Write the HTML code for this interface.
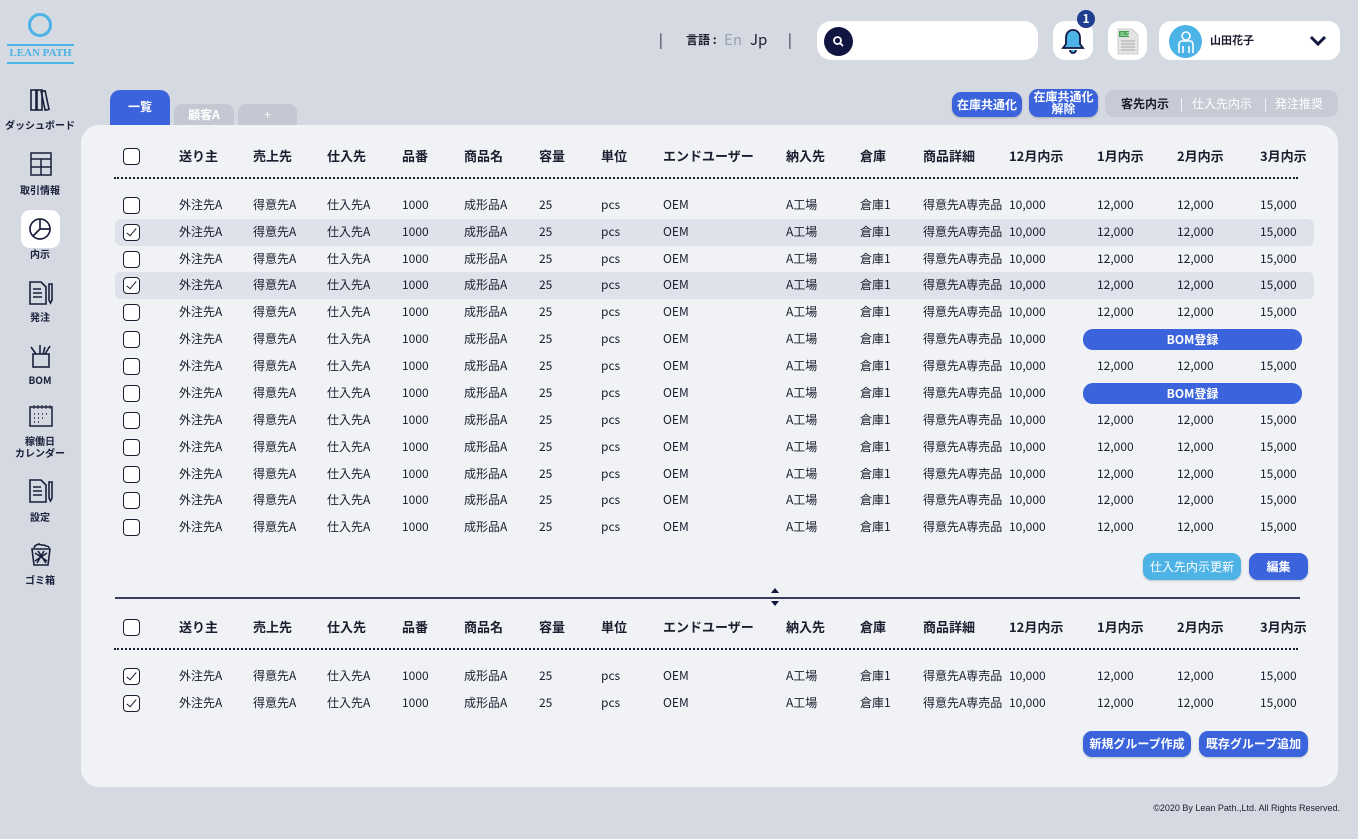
<!DOCTYPE html>
<html><head><meta charset="utf-8"><style>
*{margin:0;padding:0;box-sizing:border-box}
body{width:1358px;height:839px;background:#d5d9e1;font-family:"Noto Sans CJK JP","Liberation Sans",sans-serif;color:#1a1d2e;position:relative;overflow:hidden}
.a{position:absolute}
.side{position:absolute;width:80px;text-align:center;font-size:10px;font-weight:bold;color:#1b1f3b;left:0;line-height:12px}
.panel{position:absolute;left:81px;top:125px;width:1257px;height:662px;background:#f0f2f5;border-radius:18px}
.r{position:absolute;left:0;width:1358px;height:27px;font-size:12px}
.r span{position:absolute;top:5px;line-height:16px;white-space:nowrap}
.h{font-size:13px;font-weight:bold}
.cb{position:absolute;left:123px;top:5px;width:17px;height:17px;border:1.5px solid #1a1d2e;border-radius:4px;background:#fff}
.cb.k::after{content:"";position:absolute;left:5px;top:1px;width:4px;height:9px;border:solid #1a1d2e;border-width:0 1.3px 1.3px 0;transform:rotate(40deg)}
.hl{position:absolute;left:115px;width:1199px;height:27px;background:#dfe2ea;border-radius:6px}
.c1{left:179px}.c2{left:253px}.c3{left:327px}.c4{left:402px}.c5{left:464px}.c6{left:539px}.c7{left:601px}.c8{left:663px}.c9{left:786px}.c10{left:860px}.c11{left:923px}.c12{left:1009px}.c13{left:1097px}.c14{left:1177px}.c15{left:1260px}
.dot{position:absolute;left:114px;width:1184px;border-top:2px dotted #1a1d2e}
.btn{position:absolute;color:#fff;font-size:12px;font-weight:bold;text-align:center;border-radius:9px;background:#3a63dc;box-shadow:0 1px 2px rgba(0,0,0,.2)}
.bom{position:absolute;left:1083px;width:219px;height:21px;top:3px;background:#3a63dc;border-radius:10px;color:#fff;font-size:12px;font-weight:bold;text-align:center;line-height:21px}
.wb{position:absolute;background:#fff;border-radius:12px}
</style></head><body>
<div class="a" style="left:28px;top:13px;width:24px;height:24px;border:3px solid #4bb3e6;border-radius:50%"></div>
<div class="a" style="left:7px;top:44px;width:67px;border-top:2px solid #4bb3e6"></div>
<div class="a" style="left:2px;top:47px;width:77px;font-family:'Liberation Serif',serif;font-size:11px;font-weight:bold;color:#4bb3e6;text-align:center;line-height:13px;white-space:nowrap">LEAN PATH</div>
<div class="a" style="left:7px;top:62px;width:67px;border-top:2px solid #4bb3e6"></div>
<svg class="a" style="left:29px;top:88px" width="24" height="24" viewBox="0 0 24 24" fill="none" stroke="#1b1f3b" stroke-width="1.6"><rect x="2" y="2" width="5" height="20"/><rect x="8" y="2" width="5" height="20"/><rect x="14" y="3" width="4" height="19" transform="rotate(-12 16 12)"/></svg>
<div class="side" style="top:119px">ダッシュボード</div>
<svg class="a" style="left:30px;top:152px" width="22" height="24" viewBox="0 0 22 24" fill="none" stroke="#1b1f3b" stroke-width="1.5"><rect x="1" y="1" width="20" height="22"/><line x1="1" y1="7" x2="21" y2="7"/><line x1="11" y1="7" x2="11" y2="23"/><line x1="1" y1="15" x2="21" y2="15"/></svg>
<div class="side" style="top:184px">取引情報</div>
<div class="a" style="left:21px;top:210px;width:39px;height:38px;background:#fff;border-radius:9px"></div>
<svg class="a" style="left:28px;top:216px" width="26" height="26" viewBox="0 0 26 26" fill="none" stroke="#1b1f3b" stroke-width="1.7"><circle cx="12" cy="13" r="10"/><path d="M12 3v10h10M12 13l-7 7"/></svg>
<div class="side" style="top:248px">内示</div>
<svg class="a" style="left:28px;top:280px" width="26" height="26" viewBox="0 0 26 26" fill="none" stroke="#1b1f3b" stroke-width="1.6"><path d="M2 2h11l5 5v17H2z"/><path d="M5 9h8M5 13h9M5 17h9"/><path d="M21 4v16l1.5 3 1.5-3V4z"/></svg>
<div class="side" style="top:311px">発注</div>
<svg class="a" style="left:28px;top:343px" width="26" height="26" viewBox="0 0 26 26" fill="none" stroke="#1b1f3b" stroke-width="1.6"><rect x="5" y="11" width="16" height="13"/><path d="M3 4l5 7M12 2v9M22 3l-5 8M17 4l-2 7"/></svg>
<div class="side" style="top:374px">BOM</div>
<svg class="a" style="left:28px;top:404px" width="26" height="24" viewBox="0 0 26 24" fill="none" stroke="#1b1f3b" stroke-width="1.5"><rect x="2" y="3" width="22" height="19"/><path d="M6 1v4M10 1v4M14 1v4M18 1v4M22 1v4" stroke-width="1"/><path d="M6 10h1M10 10h1M14 10h1M18 10h1M6 14h1M10 14h1M14 14h1M6 18h1M10 18h1" stroke-width="1.5"/></svg>
<div class="side" style="top:435px">稼働日<br>カレンダー</div>
<svg class="a" style="left:28px;top:478px" width="26" height="26" viewBox="0 0 26 26" fill="none" stroke="#1b1f3b" stroke-width="1.6"><path d="M2 2h11l5 5v17H2z"/><path d="M5 9h8M5 13h9M5 17h9"/><path d="M21 4v16l1.5 3 1.5-3V4z"/></svg>
<div class="side" style="top:511px">設定</div>
<svg class="a" style="left:30px;top:542px" width="22" height="24" viewBox="0 0 22 24" fill="none" stroke="#1b1f3b" stroke-width="1.6"><path d="M2 7h18l-2 16H4z"/><path d="M4 6c1-4 4-3 5-4 2 2 5 0 7 2 2 0 3 1 3 2"/><path d="M5 11l12 8M17 11L5 19M8 9l8 12M14 9L7 21"/></svg>
<div class="side" style="top:574px">ゴミ箱</div>
<div class="a" style="left:659px;top:31px;font-size:14px;line-height:18px">|</div>
<div class="a" style="left:686px;top:32px;font-size:12px;font-weight:bold;line-height:16px">言語 :</div>
<div class="a" style="left:724px;top:31px;font-size:15px;color:#9aa1ae;line-height:18px">En</div>
<div class="a" style="left:750px;top:31px;font-size:15px;line-height:18px">Jp</div>
<div class="a" style="left:788px;top:31px;font-size:14px;line-height:18px">|</div>
<div class="wb" style="left:817px;top:21px;width:221px;height:39px;border-radius:14px"></div>
<div class="a" style="left:824px;top:27px;width:29px;height:29px;border-radius:50%;background:#101640"></div>
<svg class="a" style="left:832px;top:35px" width="13" height="13" viewBox="0 0 13 13" fill="none" stroke="#fff" stroke-width="1.8"><circle cx="5.5" cy="5.5" r="3.5"/><path d="M8 8l3 3"/></svg>
<div class="wb" style="left:1053px;top:21px;width:40px;height:39px"></div>
<svg class="a" style="left:1061px;top:27px" width="24" height="28" viewBox="0 0 24 28"><path d="M12 3c-5 0-7 4-7 8v6l-3 4h20l-3-4v-6c0-4-2-8-7-8z" fill="#4bb3e6" stroke="#101640" stroke-width="1.8"/><path d="M9 23a3 3 0 0 0 6 0" fill="#4bb3e6" stroke="#101640" stroke-width="1.8"/></svg>
<div class="a" style="left:1077px;top:10px;width:18px;height:18px;border-radius:50%;background:#1e3d8f;color:#fff;font-size:12px;font-weight:bold;text-align:center;line-height:18px">1</div>
<div class="wb" style="left:1108px;top:21px;width:39px;height:39px"></div>
<svg class="a" style="left:1117px;top:28px" width="22" height="27" viewBox="0 0 22 27"><path d="M1 1h14l6 6v19H1z" fill="#e3e3e3" stroke="#ccc"/><rect x="2" y="3" width="10" height="6" fill="#3aa34a"/><text x="3" y="8" font-size="5" fill="#fff" font-family="Liberation Sans">XLS</text><path d="M4 13h14M4 16h14M4 19h14M4 22h14" stroke="#aaa"/></svg>
<div class="wb" style="left:1159px;top:21px;width:181px;height:39px"></div>
<div class="a" style="left:1169px;top:25px;width:33px;height:33px;border-radius:50%;background:#4bb3e6"></div>
<svg class="a" style="left:1175px;top:29px" width="22" height="26" viewBox="0 0 22 26" fill="none" stroke="#fff" stroke-width="1.6"><circle cx="11" cy="7" r="4"/><path d="M4 24v-9a3 3 0 0 1 3-3h8a3 3 0 0 1 3 3v9M8 24v-7M14 24v-7"/></svg>
<div class="a" style="left:1210px;top:33px;font-size:11px;font-weight:bold;line-height:15px">山田花子</div>
<svg class="a" style="left:1309px;top:35px" width="18" height="12" viewBox="0 0 18 12" fill="none" stroke="#101640" stroke-width="3"><path d="M2 2l7 7 7-7"/></svg>
<div class="a" style="left:110px;top:90px;width:60px;height:36px;background:#3a63dc;border-radius:10px 10px 0 0;color:#fff;font-size:12px;font-weight:bold;text-align:center;line-height:34px">一覧</div>
<div class="a" style="left:174px;top:104px;width:60px;height:22px;background:#c3c8d3;border-radius:8px 8px 0 0;color:#fff;font-size:12px;font-weight:bold;text-align:center;line-height:22px">顧客A</div>
<div class="a" style="left:238px;top:104px;width:59px;height:22px;background:#c3c8d3;border-radius:8px 8px 0 0;color:#fff;font-size:12px;text-align:center;line-height:22px">+</div>
<div class="btn" style="left:952px;top:92px;width:70px;height:25px;line-height:25px">在庫共通化</div>
<div class="btn" style="left:1029px;top:89px;width:69px;height:28px;line-height:12px;padding-top:2px">在庫共通化<br>解除</div>
<div class="a" style="left:1105px;top:90px;width:233px;height:27px;background:#c6cbd6;border-radius:9px;font-size:12px;line-height:27px;color:#fff"><span style="position:absolute;left:16px;color:#1a1d2e;font-weight:bold">客先内示</span><span style="position:absolute;left:75px">|</span><span style="position:absolute;left:87px">仕入先内示</span><span style="position:absolute;left:159px">|</span><span style="position:absolute;left:170px">発注推奨</span></div>
<div class="panel"></div>
<div class="r h" style="top:143px"><div class="cb"></div><span class="c1">送り主</span><span class="c2">売上先</span><span class="c3">仕入先</span><span class="c4">品番</span><span class="c5">商品名</span><span class="c6">容量</span><span class="c7">単位</span><span class="c8">エンドユーザー</span><span class="c9">納入先</span><span class="c10">倉庫</span><span class="c11">商品詳細</span><span class="c12">12月内示</span><span class="c13">1月内示</span><span class="c14">2月内示</span><span class="c15">3月内示</span></div>
<div class="dot" style="top:177px"></div>
<div class="hl" style="top:219px"></div><div class="hl" style="top:272px"></div>
<div class="r" style="top:192px"><div class="cb"></div><span class="c1">外注先A</span><span class="c2">得意先A</span><span class="c3">仕入先A</span><span class="c4">1000</span><span class="c5">成形品A</span><span class="c6">25</span><span class="c7">pcs</span><span class="c8">OEM</span><span class="c9">A工場</span><span class="c10">倉庫1</span><span class="c11">得意先A専売品</span><span class="c12">10,000</span><span class="c13">12,000</span><span class="c14">12,000</span><span class="c15">15,000</span></div>
<div class="r" style="top:219px"><div class="cb k"></div><span class="c1">外注先A</span><span class="c2">得意先A</span><span class="c3">仕入先A</span><span class="c4">1000</span><span class="c5">成形品A</span><span class="c6">25</span><span class="c7">pcs</span><span class="c8">OEM</span><span class="c9">A工場</span><span class="c10">倉庫1</span><span class="c11">得意先A専売品</span><span class="c12">10,000</span><span class="c13">12,000</span><span class="c14">12,000</span><span class="c15">15,000</span></div>
<div class="r" style="top:246px"><div class="cb"></div><span class="c1">外注先A</span><span class="c2">得意先A</span><span class="c3">仕入先A</span><span class="c4">1000</span><span class="c5">成形品A</span><span class="c6">25</span><span class="c7">pcs</span><span class="c8">OEM</span><span class="c9">A工場</span><span class="c10">倉庫1</span><span class="c11">得意先A専売品</span><span class="c12">10,000</span><span class="c13">12,000</span><span class="c14">12,000</span><span class="c15">15,000</span></div>
<div class="r" style="top:272px"><div class="cb k"></div><span class="c1">外注先A</span><span class="c2">得意先A</span><span class="c3">仕入先A</span><span class="c4">1000</span><span class="c5">成形品A</span><span class="c6">25</span><span class="c7">pcs</span><span class="c8">OEM</span><span class="c9">A工場</span><span class="c10">倉庫1</span><span class="c11">得意先A専売品</span><span class="c12">10,000</span><span class="c13">12,000</span><span class="c14">12,000</span><span class="c15">15,000</span></div>
<div class="r" style="top:299px"><div class="cb"></div><span class="c1">外注先A</span><span class="c2">得意先A</span><span class="c3">仕入先A</span><span class="c4">1000</span><span class="c5">成形品A</span><span class="c6">25</span><span class="c7">pcs</span><span class="c8">OEM</span><span class="c9">A工場</span><span class="c10">倉庫1</span><span class="c11">得意先A専売品</span><span class="c12">10,000</span><span class="c13">12,000</span><span class="c14">12,000</span><span class="c15">15,000</span></div>
<div class="r" style="top:326px"><div class="cb"></div><span class="c1">外注先A</span><span class="c2">得意先A</span><span class="c3">仕入先A</span><span class="c4">1000</span><span class="c5">成形品A</span><span class="c6">25</span><span class="c7">pcs</span><span class="c8">OEM</span><span class="c9">A工場</span><span class="c10">倉庫1</span><span class="c11">得意先A専売品</span><span class="c12">10,000</span><div class="bom">BOM登録</div></div>
<div class="r" style="top:353px"><div class="cb"></div><span class="c1">外注先A</span><span class="c2">得意先A</span><span class="c3">仕入先A</span><span class="c4">1000</span><span class="c5">成形品A</span><span class="c6">25</span><span class="c7">pcs</span><span class="c8">OEM</span><span class="c9">A工場</span><span class="c10">倉庫1</span><span class="c11">得意先A専売品</span><span class="c12">10,000</span><span class="c13">12,000</span><span class="c14">12,000</span><span class="c15">15,000</span></div>
<div class="r" style="top:380px"><div class="cb"></div><span class="c1">外注先A</span><span class="c2">得意先A</span><span class="c3">仕入先A</span><span class="c4">1000</span><span class="c5">成形品A</span><span class="c6">25</span><span class="c7">pcs</span><span class="c8">OEM</span><span class="c9">A工場</span><span class="c10">倉庫1</span><span class="c11">得意先A専売品</span><span class="c12">10,000</span><div class="bom">BOM登録</div></div>
<div class="r" style="top:407px"><div class="cb"></div><span class="c1">外注先A</span><span class="c2">得意先A</span><span class="c3">仕入先A</span><span class="c4">1000</span><span class="c5">成形品A</span><span class="c6">25</span><span class="c7">pcs</span><span class="c8">OEM</span><span class="c9">A工場</span><span class="c10">倉庫1</span><span class="c11">得意先A専売品</span><span class="c12">10,000</span><span class="c13">12,000</span><span class="c14">12,000</span><span class="c15">15,000</span></div>
<div class="r" style="top:434px"><div class="cb"></div><span class="c1">外注先A</span><span class="c2">得意先A</span><span class="c3">仕入先A</span><span class="c4">1000</span><span class="c5">成形品A</span><span class="c6">25</span><span class="c7">pcs</span><span class="c8">OEM</span><span class="c9">A工場</span><span class="c10">倉庫1</span><span class="c11">得意先A専売品</span><span class="c12">10,000</span><span class="c13">12,000</span><span class="c14">12,000</span><span class="c15">15,000</span></div>
<div class="r" style="top:461px"><div class="cb"></div><span class="c1">外注先A</span><span class="c2">得意先A</span><span class="c3">仕入先A</span><span class="c4">1000</span><span class="c5">成形品A</span><span class="c6">25</span><span class="c7">pcs</span><span class="c8">OEM</span><span class="c9">A工場</span><span class="c10">倉庫1</span><span class="c11">得意先A専売品</span><span class="c12">10,000</span><span class="c13">12,000</span><span class="c14">12,000</span><span class="c15">15,000</span></div>
<div class="r" style="top:487px"><div class="cb"></div><span class="c1">外注先A</span><span class="c2">得意先A</span><span class="c3">仕入先A</span><span class="c4">1000</span><span class="c5">成形品A</span><span class="c6">25</span><span class="c7">pcs</span><span class="c8">OEM</span><span class="c9">A工場</span><span class="c10">倉庫1</span><span class="c11">得意先A専売品</span><span class="c12">10,000</span><span class="c13">12,000</span><span class="c14">12,000</span><span class="c15">15,000</span></div>
<div class="r" style="top:514px"><div class="cb"></div><span class="c1">外注先A</span><span class="c2">得意先A</span><span class="c3">仕入先A</span><span class="c4">1000</span><span class="c5">成形品A</span><span class="c6">25</span><span class="c7">pcs</span><span class="c8">OEM</span><span class="c9">A工場</span><span class="c10">倉庫1</span><span class="c11">得意先A専売品</span><span class="c12">10,000</span><span class="c13">12,000</span><span class="c14">12,000</span><span class="c15">15,000</span></div>
<div class="btn" style="left:1143px;top:553px;width:98px;height:27px;line-height:27px;background:#4db3e6;font-weight:normal">仕入先内示更新</div>
<div class="btn" style="left:1249px;top:553px;width:59px;height:27px;line-height:27px">編集</div>
<div class="a" style="left:115px;top:597px;width:1185px;border-top:2px solid #3a3d5c"></div>
<div class="a" style="left:771px;top:588px;width:0;height:0;border:4px solid transparent;border-bottom:5px solid #101640;border-top:0"></div>
<div class="a" style="left:771px;top:601px;width:0;height:0;border:4px solid transparent;border-top:5px solid #101640;border-bottom:0"></div>
<div class="r h" style="top:614px"><div class="cb"></div><span class="c1">送り主</span><span class="c2">売上先</span><span class="c3">仕入先</span><span class="c4">品番</span><span class="c5">商品名</span><span class="c6">容量</span><span class="c7">単位</span><span class="c8">エンドユーザー</span><span class="c9">納入先</span><span class="c10">倉庫</span><span class="c11">商品詳細</span><span class="c12">12月内示</span><span class="c13">1月内示</span><span class="c14">2月内示</span><span class="c15">3月内示</span></div>
<div class="dot" style="top:648px"></div>
<div class="r" style="top:663px"><div class="cb k"></div><span class="c1">外注先A</span><span class="c2">得意先A</span><span class="c3">仕入先A</span><span class="c4">1000</span><span class="c5">成形品A</span><span class="c6">25</span><span class="c7">pcs</span><span class="c8">OEM</span><span class="c9">A工場</span><span class="c10">倉庫1</span><span class="c11">得意先A専売品</span><span class="c12">10,000</span><span class="c13">12,000</span><span class="c14">12,000</span><span class="c15">15,000</span></div>
<div class="r" style="top:690px"><div class="cb k"></div><span class="c1">外注先A</span><span class="c2">得意先A</span><span class="c3">仕入先A</span><span class="c4">1000</span><span class="c5">成形品A</span><span class="c6">25</span><span class="c7">pcs</span><span class="c8">OEM</span><span class="c9">A工場</span><span class="c10">倉庫1</span><span class="c11">得意先A専売品</span><span class="c12">10,000</span><span class="c13">12,000</span><span class="c14">12,000</span><span class="c15">15,000</span></div>
<div class="btn" style="left:1083px;top:731px;width:108px;height:26px;line-height:26px">新規グループ作成</div>
<div class="btn" style="left:1199px;top:731px;width:109px;height:26px;line-height:26px">既存グループ追加</div>
<div class="a" style="right:18px;top:802px;font-size:9px;line-height:12px;font-family:'Liberation Sans',sans-serif">©2020 By Lean Path.,Ltd. All Rights Reserved.</div>
</body></html>
